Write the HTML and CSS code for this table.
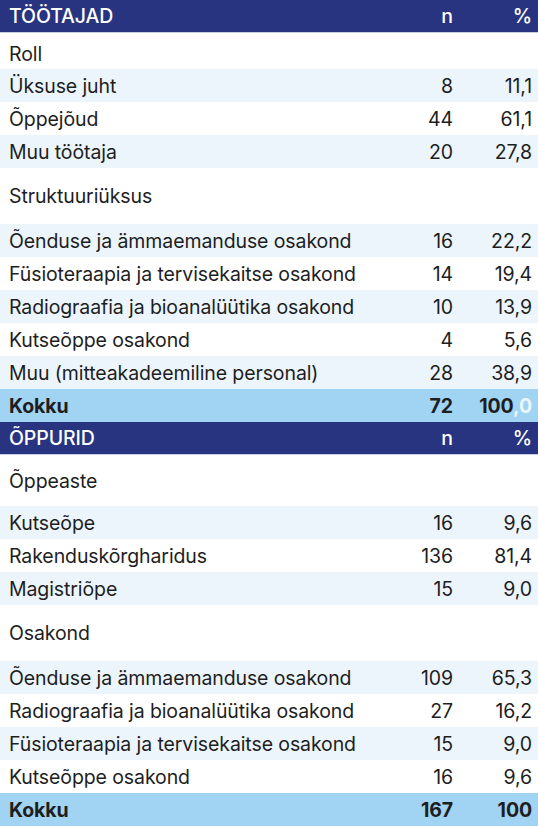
FILE: index.html
```html
<!DOCTYPE html>
<html lang="et">
<head>
<meta charset="UTF-8" />
<meta name="viewport" content="width=device-width, initial-scale=1.0" />
<title>Töötajad ja õppurid</title>
<link rel="stylesheet" href="styles.css">
</head>
<body>

<table class="stats">
  <colgroup>
    <col>
    <col class="col-n">
    <col class="col-pct">
  </colgroup>

  <!-- Töötajad -->
  <tr class="head"><th>TÖÖTAJAD</th><th class="num">n</th><th class="pct">%</th></tr>
  <tr class="cat cat-first"><td colspan="3">Roll</td></tr>
  <tr class="alt"><td>Üksuse juht</td><td class="num">8</td><td class="pct">11,1</td></tr>
  <tr><td>Õppejõud</td><td class="num">44</td><td class="pct">61,1</td></tr>
  <tr class="alt"><td>Muu töötaja</td><td class="num">20</td><td class="pct">27,8</td></tr>
  <tr class="cat cat-tall"><td colspan="3">Struktuuriüksus</td></tr>
  <tr class="alt"><td>Õenduse ja ämmaemanduse osakond</td><td class="num">16</td><td class="pct">22,2</td></tr>
  <tr><td>Füsioteraapia ja tervisekaitse osakond</td><td class="num">14</td><td class="pct">19,4</td></tr>
  <tr class="alt"><td>Radiograafia ja bioanalüütika osakond</td><td class="num">10</td><td class="pct">13,9</td></tr>
  <tr><td>Kutseõppe osakond</td><td class="num">4</td><td class="pct">5,6</td></tr>
  <tr class="alt"><td>Muu (mitteakadeemiline personal)</td><td class="num">28</td><td class="pct">38,9</td></tr>
  <tr class="total"><td>Kokku</td><td class="num">72</td><td class="pct">100<span class="faint">,0</span></td></tr>

  <!-- Õppurid -->
  <tr class="head"><th>ÕPPURID</th><th class="num">n</th><th class="pct">%</th></tr>
  <tr class="cat cat-mid"><td colspan="3">Õppeaste</td></tr>
  <tr class="alt"><td>Kutseõpe</td><td class="num">16</td><td class="pct">9,6</td></tr>
  <tr><td>Rakenduskõrgharidus</td><td class="num">136</td><td class="pct">81,4</td></tr>
  <tr class="alt"><td>Magistriõpe</td><td class="num">15</td><td class="pct">9,0</td></tr>
  <tr class="cat cat-tall"><td colspan="3">Osakond</td></tr>
  <tr class="alt"><td>Õenduse ja ämmaemanduse osakond</td><td class="num">109</td><td class="pct">65,3</td></tr>
  <tr><td>Radiograafia ja bioanalüütika osakond</td><td class="num">27</td><td class="pct">16,2</td></tr>
  <tr class="alt"><td>Füsioteraapia ja tervisekaitse osakond</td><td class="num">15</td><td class="pct">9,0</td></tr>
  <tr><td>Kutseõppe osakond</td><td class="num">16</td><td class="pct">9,6</td></tr>
  <tr class="total"><td>Kokku</td><td class="num">167</td><td class="pct">100</td></tr>
</table>

</body>
</html>
```

FILE: styles.css
```css
:root {
  --navy: #283480;
  --row-alt: #ecf5fc;
  --total: #a1d3f2;
  --text: #1e1e1e;
  --font-body: 'Inter', 'Noto Sans', sans-serif;
}

body {
  margin: 0;
  background: #fff;
  font-family: var(--font-body);
  font-size: 19.5px;
  letter-spacing: -0.1px;
  color: var(--text);
}

.stats {
  width: 538px;
  border-collapse: collapse;
  table-layout: fixed;
}

.col-n { width: 80px; }
.col-pct { width: 85px; }

.stats th,
.stats td {
  height: 33px;
  padding: 0 0 0 9px;
  text-align: left;
  white-space: nowrap;
  vertical-align: middle;
}

.stats .num { text-align: right; padding-right: 0; }
.stats .pct { text-align: right; padding-right: 6px; }

.head th {
  background: var(--navy);
  color: #fff;
  font-weight: 500;
  height: 32px;
  border-bottom: 1px solid #c9cede;
}

.alt td { background: var(--row-alt); }

.cat-first td { height: 30px; padding-top: 6px; }
.cat-mid td { height: 51px; }
.cat-tall td { height: 56px; }

.total td {
  background: var(--total);
  font-weight: 700;
}

.faint { color: #eaf5fc; }
```
